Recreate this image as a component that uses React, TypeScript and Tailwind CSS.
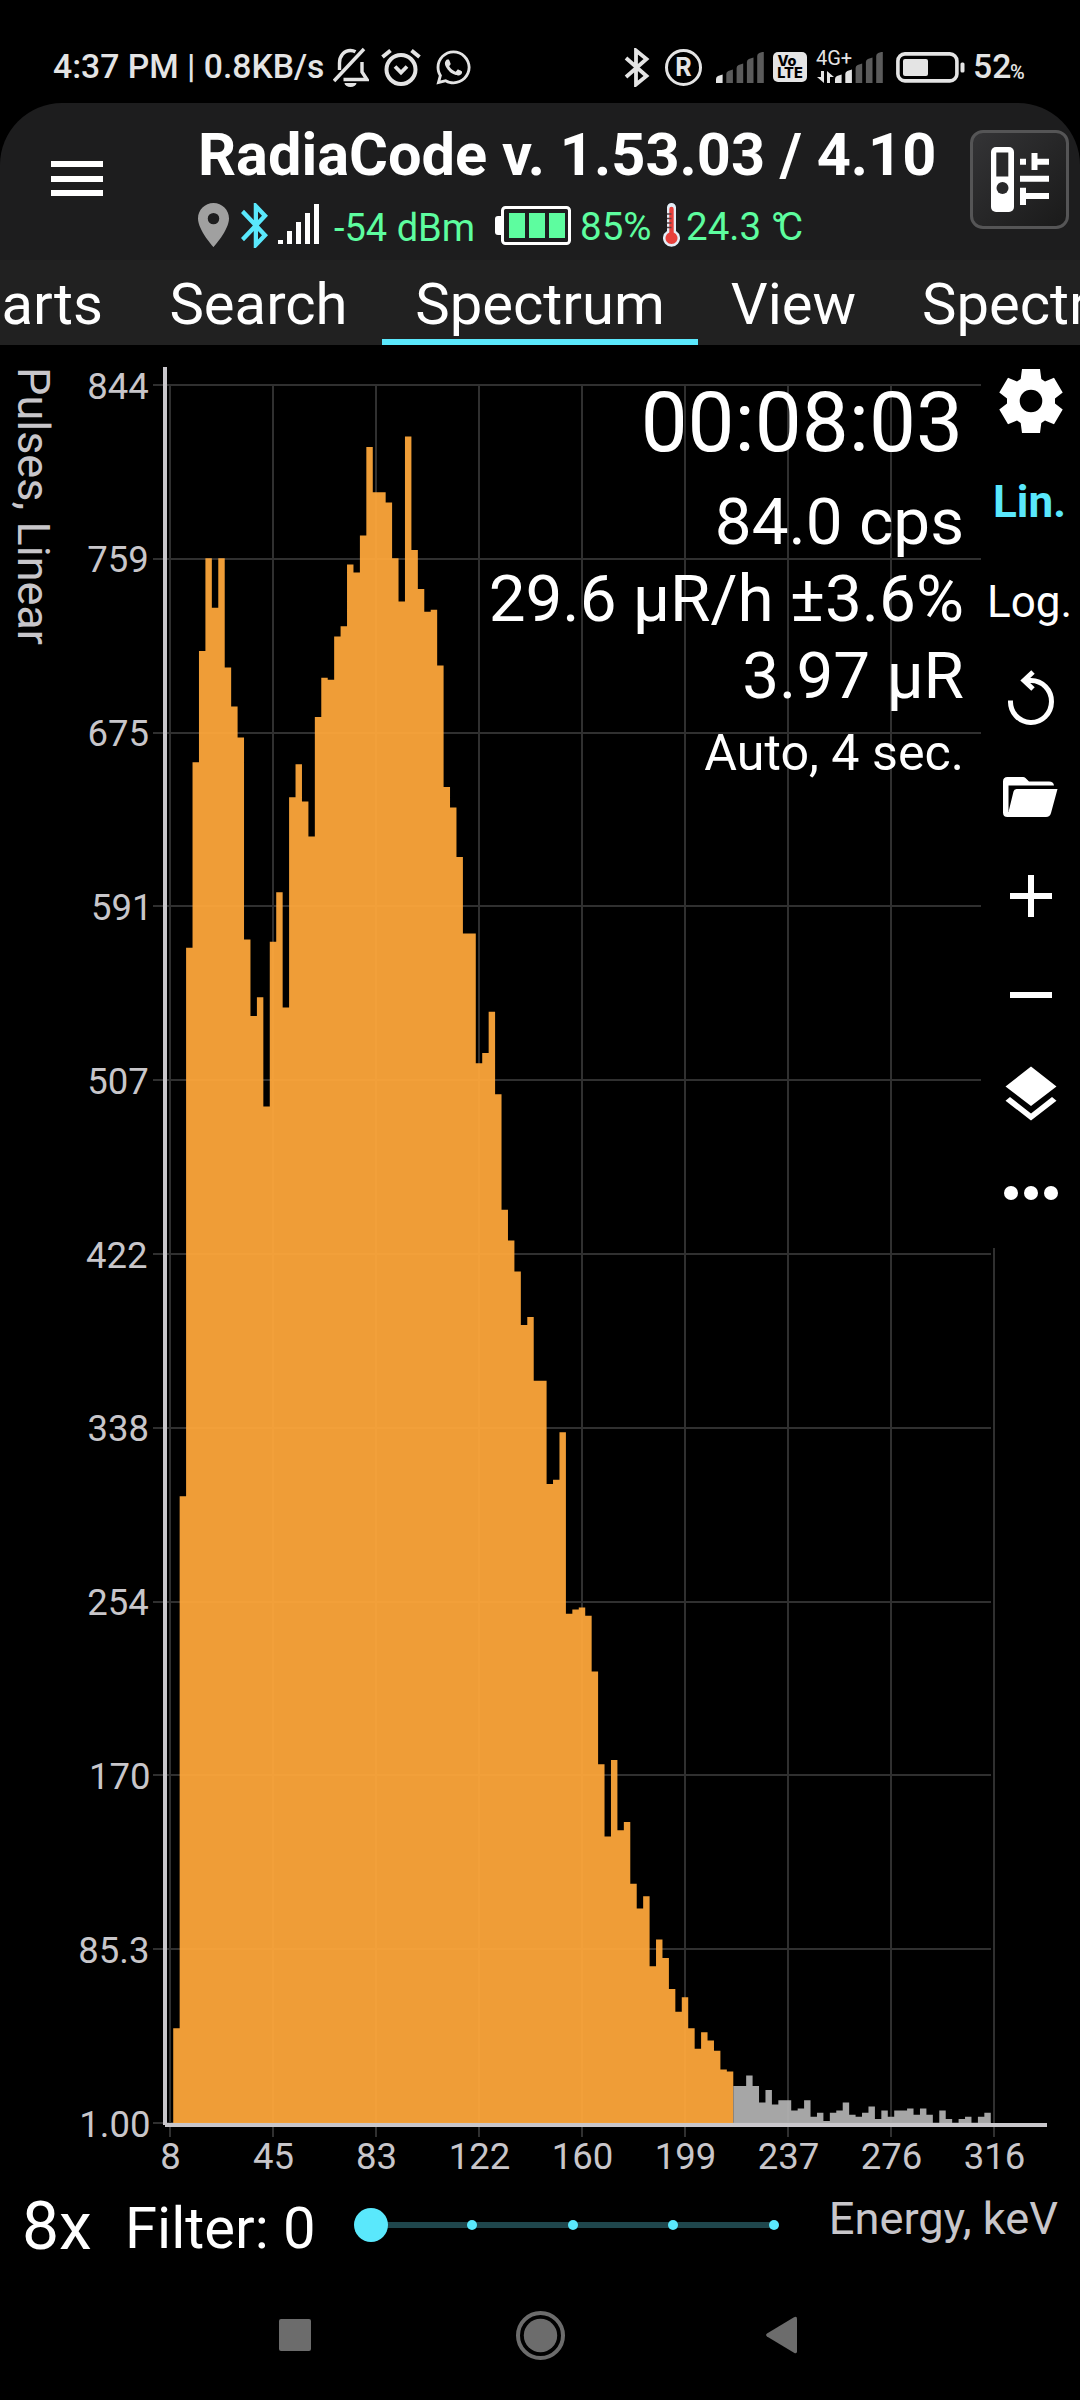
import type { ReactNode } from 'react';
import { FaWhatsapp } from 'react-icons/fa';

// pulses per channel, starting at channel 1
const SPECTRUM = [
  47, 305, 571, 661, 715, 760, 736, 760, 707, 688, 673, 575, 538, 547, 494, 574, 598, 542, 644, 660, 642, 625, 683, 702,
  701, 722, 727, 757, 753, 771, 814, 792, 792, 787, 760, 739, 819, 764, 745, 734, 735, 708, 649, 639, 615, 578, 578, 515,
  520, 540, 500, 444, 429, 414, 388, 392, 361, 361, 311, 313, 336, 248, 250, 251, 247, 220, 175, 140, 177, 143, 147, 117,
  105, 111, 77, 90, 81, 66, 55, 62, 47, 37, 45, 41, 36, 27, 26, 19, 19, 24, 19, 11, 17, 10, 12, 12, 7, 8, 12, 4, 6, 2, 6,
  7, 11, 5, 4, 6, 9, 3, 7, 4, 7, 7, 8, 5, 8, 5, 1, 7, 3, 1, 3, 4, 1, 4, 6,
];
const ROI_END = 87;

// label and its right edge
const Y_LABELS: [string, number][] = [
  ['844', 148.7],
  ['759', 148.7],
  ['675', 149],
  ['591', 152.5],
  ['507', 148.7],
  ['422', 147.5],
  ['338', 149],
  ['254', 148.7],
  ['170', 150.5],
  ['85.3', 149.5],
  ['1.00', 150.5],
];
const X_LABELS = ['8', '45', '83', '122', '160', '199', '237', '276', '316'];

const X0 = 170;
const STEP = 103 / 16;
const TOP = 40;
const BASE = 1778;

const yOf = (count: number) => BASE - ((count - 1) * (BASE - TOP)) / 843;
const xOf = (channel: number) => X0 + (channel - 0.5) * STEP;

function areaPath(from: number, to: number) {
  let d = `M${xOf(from)} ${BASE}`;
  for (let ch = from; ch <= to; ch++) {
    d += `V${yOf(SPECTRUM[ch - 1]).toFixed(1)}H${xOf(ch + 1).toFixed(2)}`;
  }
  return `${d}V${BASE}Z`;
}

function SpectrumChart() {
  return (
    <svg width="1080" height="1835" viewBox="0 0 1080 1835" className="block">
      <g fill="#303030">
        {Y_LABELS.map(([l], i) => (
          <rect key={l} x={153} y={Math.round(TOP + i * 173.8) - 1} width={i > 4 ? 838 : 828} height={2} />
        ))}
        {X_LABELS.map((l, i) => (
          <rect key={l} x={X0 + i * 103 - 1} y={TOP} width={2} height={1752} />
        ))}
      </g>
      <path d={areaPath(1, ROI_END)} fill="#ffa83b" fillOpacity={0.938} />
      <path d={areaPath(ROI_END + 1, SPECTRUM.length)} fill="#b1b1b1" fillOpacity={0.938} />
      <rect x={163} y={22} width={4} height={1758} fill="#c9c7cb" />
      <rect x={165} y={1778} width={882} height={4} fill="#c9c7cb" />
      <g fill="#c8c6ca" fontSize={36.5}>
        {Y_LABELS.map(([l, right], i) => (
          <text key={l} x={right} y={TOP + i * 173.8 + 13.5} textAnchor="end">
            {l}
          </text>
        ))}
        {X_LABELS.map((l, i) => (
          <text key={l} x={X0 + i * 103 + 0.5} y={1823.5} textAnchor="middle">
            {l}
          </text>
        ))}
      </g>
      <text transform="translate(18 22) rotate(90)" fontSize={45} fill="#c8c6ca">
        Pulses, Linear
      </text>
    </svg>
  );
}

function CellSignal({ active }: { active: number }) {
  const tops = [23, 18, 12, 6, 0];
  return (
    <svg width="48" height="31" viewBox="0 0 48 31">
      {tops.map((t, i) => (
        <path
          key={t}
          d={`M${i * 10.3} 31V${t + 4}q0-2 2-3l4.6-1.5V31z`}
          fill={i < active ? '#e4e4e4' : '#5b5b5b'}
        />
      ))}
    </svg>
  );
}

function StatusBar() {
  return (
    <div className="flex h-[103px] items-center pt-[31px] pl-[53px] text-[33.7px] leading-none font-medium text-[#e4e4e4]">
      <span className="w-[280px] whitespace-nowrap">4:37 PM | 0.8KB/s</span>
      <svg width="36" height="40" viewBox="0 0 36 40" fill="none" stroke="#e4e4e4" strokeWidth="3.4">
        <path d="M1 34 31 2" />
        <path d="M6.500 23V16C6.500 9 11 3.500 17.500 3.500c2 0 3.500.4 5 1.300M29 15v10l5 7.500H10.500" />
        <path d="M11.500 36h12a6 4 0 0 1-12 0z" fill="#e4e4e4" stroke="none" />
      </svg>
      <svg width="40" height="38" viewBox="0 0 40 38" fill="none" stroke="#e4e4e4" className="ml-[12px]">
        <circle cx="20" cy="21.500" r="14.500" strokeWidth="4" />
        <path d="m14 18.500 6 6 6-6" strokeWidth="3.800" />
        <path d="m1.500 9 8-6.500M38.500 9l-8-6.500" strokeWidth="4" />
      </svg>
      <FaWhatsapp className="ml-[13px] size-[39px]" />
      <div className="ml-auto flex items-center pr-[53px]">
        <svg width="26" height="39" viewBox="0 0 26 39" fill="none" stroke="#e4e4e4" strokeWidth="3.800">
          <path d="m2 10 20.500 18L12 36.500v-34L22.500 11 2 29" />
        </svg>
        <div className="ml-[15px] flex size-[37px] items-center justify-center rounded-full border-[3.500px] border-[#e4e4e4] font-['Inter'] text-[25px] font-bold">
          R
        </div>
        <div className="ml-[14px] pt-[1px]">
          <CellSignal active={1} />
        </div>
        <div className="ml-[9px] flex h-[30px] w-[34px] flex-col items-center justify-center rounded-[5px] bg-[#e4e4e4] font-['Inter'] text-[14.500px] leading-[12.500px] font-extrabold text-black">
          <span className="-ml-[6px]">Vo</span>
          <span>LTE</span>
        </div>
        {/* 4G+ sits above the data arrows, to the left of the tall bars */}
        <div className="relative ml-[9px] flex h-[31px] w-[67px] items-end justify-end">
          <span className="absolute -top-[4px] left-0 text-[20px] font-normal">4G+</span>
          <svg width="17" height="12" viewBox="0 0 17 12" className="absolute bottom-0 left-[1px]" fill="#e4e4e4">
            <path d="M4 0h3v12L0 6h4zM10 12h3V6h4L10 0z" />
          </svg>
          <CellSignal active={2} />
        </div>
        <svg width="69" height="31" viewBox="0 0 69 31" className="ml-[13px]">
          <rect x="1.900" y="1.900" width="59" height="27" rx="7" fill="none" stroke="#e4e4e4" strokeWidth="3.600" />
          <rect x="7" y="7" width="25" height="17" rx="2" fill="#e4e4e4" />
          <rect x="64.500" y="10.500" width="4" height="10" rx="1.500" fill="#e4e4e4" />
        </svg>
        <span className="ml-[8px] w-[37px]">52</span>
        <span className="w-[17px] pt-[10px] text-[20px]">%</span>
      </div>
    </div>
  );
}

function DeviceStatus() {
  return (
    <div className="flex h-[44px] items-center text-[38.500px] leading-none whitespace-nowrap text-[#5dfd9f]">
      <svg width="31" height="44" viewBox="5 2 14 20" preserveAspectRatio="none" fill="#a0a0a0">
        <path d="M12 2C8.130 2 5 5.130 5 9c0 5.250 7 13 7 13s7-7.750 7-13c0-3.870-3.130-7-7-7zm0 9.700a2.600 2.600 0 1 1 0-5.200 2.600 2.600 0 0 1 0 5.200z" />
      </svg>
      <svg width="27" height="45" viewBox="5 2 12.710 20" preserveAspectRatio="none" fill="#5ae8fc" className="ml-[12px]">
        <path d="M17.710 7.710 12 2h-1v7.590L6.410 5 5 6.410 10.590 12 5 17.590 6.410 19 11 14.410V22h1l5.710-5.710-4.300-4.290 4.300-4.290zM13 5.830l1.880 1.880L13 9.590V5.830zm1.880 10.460L13 18.170v-3.760l1.880 1.880z" />
      </svg>
      <div className="mb-[2px] ml-[10px] flex h-[40px] items-end gap-[4px]">
        <i className="h-[4px] w-[5px] bg-white" />
        <i className="h-[13px] w-[5px] bg-white" />
        <i className="h-[22px] w-[5px] bg-white" />
        <i className="h-[31px] w-[5px] bg-white" />
        <i className="h-[40px] w-[5px] bg-white" />
      </div>
      <span className="w-[176px] pt-[5px] pl-[15px] text-[38px]">-54 dBm</span>
      <svg width="76" height="39" viewBox="0 0 76 39">
        <rect x="0" y="10" width="9" height="19" rx="3" fill="#fff" />
        <rect x="7.500" y="1.500" width="67" height="36" rx="3" fill="#1d1d1e" stroke="#fff" strokeWidth="3" />
        <path d="M14 7h16v25H14zM34 7h16v25H34zM54 7h16v25H54z" fill="#5dfd9f" />
      </svg>
      <span className="w-[92px] pt-[5px] pl-[9px]">85%</span>
      <svg width="17" height="44" viewBox="0 0 17 44">
        <path d="M4 4.500a4.500 4.500 0 0 1 9 0V28a8.500 8.500 0 1 1-9 0z" fill="#e3edf7" />
        <path d="M6.300 6a2.200 2.200 0 0 1 4.400 0v23.500a6 6 0 1 1-4.400 0z" fill="#e8403c" />
        <path d="M4 11h4.500M4 15.500h4.500M4 20h4.500M4 24.500h4.500" stroke="#5b4347" strokeWidth="1.600" />
      </svg>
      <span className="pt-[5px] pl-[6px]">
        24.3 <span className="tracking-[-5px]">°</span>
        <span className="-ml-[2px]">C</span>
      </span>
    </div>
  );
}

function Header() {
  return (
    <header className="relative flex h-[157px] rounded-t-[62px] bg-[#1d1d1e]">
      <button className="mt-[58px] ml-[51px] flex h-[35px] w-[52px] flex-col justify-between">
        <i className="h-[6px] w-full bg-white" />
        <i className="h-[6px] w-full bg-white" />
        <i className="h-[6px] w-full bg-white" />
      </button>
      <div className="ml-[95px] flex flex-col pt-[16px]">
        <h1 className="text-[59.500px] leading-[72px] font-bold whitespace-nowrap text-white">
          RadiaCode v. 1.53.03 / 4.10
        </h1>
        <div className="mt-[12px]">
          <DeviceStatus />
        </div>
      </div>
      <button className="absolute top-[27px] right-[11px] h-[99px] w-[99px] rounded-[13px] border-[3px] border-[#555556] bg-linear-to-br from-[#343436] to-[#1a1a1a]">
        <svg width="93" height="93" viewBox="973 133 93 93" fill="#fff">
          <rect x="991" y="147" width="23" height="65" rx="5" />
          <rect x="996.300" y="152.500" width="12" height="24" fill="#29292a" />
          <circle cx="1002.500" cy="188" r="6" fill="#29292a" />
          <path d="M1020 158.700h6v6h-6zM1031.500 153h6v5.700H1049v6h-11.500v5.300h-6zM1020 175.700h29v6h-29zM1020 187.700h6v5.300h23v6h-23v6h-6z" />
        </svg>
      </button>
    </header>
  );
}

function Tabs() {
  return (
    <nav className="flex h-[85px] overflow-hidden bg-[#212121] text-[58px] leading-[89px] whitespace-nowrap text-white">
      <span className="flex w-[135px] shrink-0 justify-end pr-[32px]">Charts</span>
      <span className="w-[247px] shrink-0 text-center">Search</span>
      <span className="h-[85px] w-[316px] shrink-0 border-b-[6px] border-[#5ae8fc] text-center">Spectrum</span>
      <span className="w-[191px] shrink-0 text-center">View</span>
      <span className="shrink-0 pl-[33px]">Spectrogram</span>
    </nav>
  );
}

function Readings() {
  return (
    <div className="absolute top-[26px] right-[116px] text-right text-[65.600px] leading-[77px] whitespace-nowrap text-white">
      <div className="pr-[1px] pb-[10px] text-[83.600px] leading-[102px]">00:08:03</div>
      <div>84.0 cps</div>
      <div>29.6 µR/h ±3.6%</div>
      <div>3.97 µR</div>
      <div className="text-[50.200px]">Auto, 4 sec.</div>
    </div>
  );
}

function ToolButton({ children }: { children: ReactNode }) {
  return <button className="flex h-[99px] w-full items-center justify-center">{children}</button>;
}

const GEAR_TOOTH = 'M-24-2.500-31.700-8.500-23-23.300-14-19.500-10.300-22-9-32H9L10.300-22 14-19.500 23-23.300 31.700-8.500 24-2.500';

function Toolbar() {
  return (
    <div className="absolute top-[6px] right-0 h-[897px] w-[99px] bg-black text-[44px] leading-none text-white">
      <ToolButton>
        <svg width="66" height="66" viewBox="-33 -33 66 66" fill="#fff">
          <path
            fillRule="evenodd"
            d={`${GEAR_TOOTH}V2.500L31.700 8.500 23 23.300 14 19.500 10.300 22 9 32H-9L-10.300 22-14 19.500-23 23.300-31.700 8.500-24 2.500ZM0-11.300a11.300 11.300 0 1 0 0 22.600 11.300 11.300 0 1 0 0-22.600Z`}
          />
        </svg>
      </ToolButton>
      <ToolButton>
        <span className="pt-[5px] pr-[2px] font-bold text-[#5ae8fc]">Lin.</span>
      </ToolButton>
      <ToolButton>
        <span className="pt-[6px] pr-[2px]">Log.</span>
      </ToolButton>
      <ToolButton>
        <svg width="48" height="56" viewBox="1007 671 48 56" fill="none" stroke="#fff" strokeWidth="5">
          <path d="M1010.500 701.500A20.500 21 0 1 0 1031 681.500H1025" />
          <path d="m1033 673-9 8.500 9 8.500" strokeWidth="5" />
        </svg>
      </ToolButton>
      <ToolButton>
        <svg width="56" height="42" viewBox="1003 776 56 42" fill="#fff">
          <path d="M1007.500 777h15.500q1.500 0 2.500 1l3.500 3.500h20q4.500 0 5 4h-45.500V812l5-20.500q.6-2.500 3-2.500H1057.500l-6.500 24q-1 4-5 4h-38.500q-4.500 0-4.500-4.500v-31q0-4.500 4.500-4.500z" />
        </svg>
      </ToolButton>
      <ToolButton>
        <svg width="44" height="44" viewBox="0 0 44 44" fill="#fff">
          <path d="M19 1h6v18h18v6H25v18h-6V25H1v-6h18z" />
        </svg>
      </ToolButton>
      <ToolButton>
        <i className="h-[6px] w-[42px] bg-white" />
      </ToolButton>
      <ToolButton>
        <svg width="52" height="55" viewBox="1005 1066 52 55" fill="#fff">
          <path d="m1031 1066.500 25.500 20L1031 1106l-25.500-19.500zM1031 1113.500l21-16.500 4.500 3.700L1031 1120.500l-25.500-19.800 4.500-3.700z" />
        </svg>
      </ToolButton>
      <ToolButton>
        <div className="flex gap-[6px]">
          <i className="size-[14px] rounded-full bg-white" />
          <i className="size-[14px] rounded-full bg-white" />
          <i className="size-[14px] rounded-full bg-white" />
        </div>
      </ToolButton>
    </div>
  );
}

function FilterRow() {
  return (
    <div className="flex h-[90px] items-center leading-none whitespace-nowrap text-white">
      <span className="w-[125px] pt-[4px] pl-[22px] text-[66px]">8x</span>
      <span className="w-[229px] pt-[6px] text-[58px]">Filter: 0</span>
      <div className="relative flex h-[34px] w-[425px] items-center justify-between pl-[12px]">
        <i className="absolute right-[5px] left-[17px] h-[6px] bg-[#1f464c]" />
        {[0, 1, 2, 3, 4].map((n) => (
          <i key={n} className="relative size-[10px] rounded-full bg-[#5ae8fc]" />
        ))}
        <i className="absolute left-0 size-[34px] rounded-full bg-[#5ae8fc]" />
      </div>
      <span className="ml-auto pr-[22px] pb-[13px] text-[45.200px] text-[#c8c6ca]">Energy, keV</span>
    </div>
  );
}

function NavBar() {
  return (
    <div className="flex h-[130px] items-center">
      <i className="ml-[279px] size-[32px] rounded-[2px] bg-[#6c6c6c]" />
      <svg width="50" height="50" viewBox="0 0 50 50" className="ml-[205px]" fill="#6c6c6c">
        <circle cx="24.500" cy="25.500" r="22.500" fill="none" stroke="#6c6c6c" strokeWidth="4" />
        <circle cx="24.500" cy="25.500" r="16.700" />
      </svg>
      <svg width="32" height="38" viewBox="0 0 32 38" className="ml-[200px]" fill="#6c6c6c">
        <path d="M1 17.500 28 1.300q3-1.600 3 1.500v32.400q0 3.100-3 1.500L1 20.500q-1.800-1.500 0-3z" />
      </svg>
    </div>
  );
}

export default function App() {
  return (
    <div className="h-[2400px] w-[1080px] overflow-hidden bg-black font-['Roboto',sans-serif]">
      <StatusBar />
      <Header />
      <Tabs />
      <main className="relative h-[1835px]">
        <SpectrumChart />
        <Readings />
        <Toolbar />
      </main>
      <FilterRow />
      <NavBar />
    </div>
  );
}
